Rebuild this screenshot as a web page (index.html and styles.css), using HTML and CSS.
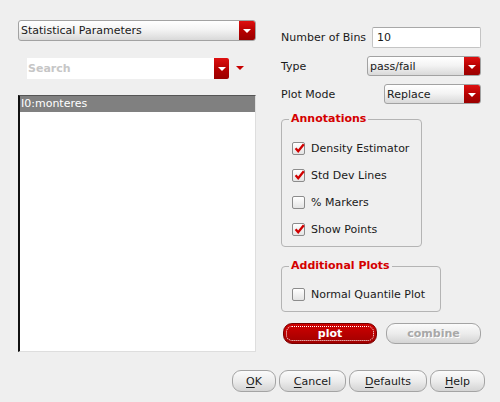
FILE: index.html
```html
<!DOCTYPE html>
<html>
<head>
<meta charset="utf-8">
<link rel="stylesheet" href="styles.css">
</head>
<body>
<div class="dialog">
  <div class="main">
    <div class="left">
      <div class="combo wide">
        <span class="combo-text">Statistical Parameters</span>
        <span class="combo-btn"><span class="tri"></span></span>
      </div>
      <div class="search-row">
        <div class="search">
          <span class="placeholder">Search</span>
          <span class="search-btn"><span class="tri"></span></span>
        </div>
        <span class="red-tri"></span>
      </div>
      <div class="list">
        <div class="list-item selected">I0:monteres</div>
      </div>
    </div>
    <div class="right">
      <div class="row">
        <span class="label">Number of Bins</span>
        <div class="input bins">10</div>
      </div>
      <div class="row">
        <span class="label">Type</span>
        <div class="combo type">
          <span class="combo-text">pass/fail</span>
          <span class="combo-btn"><span class="tri"></span></span>
        </div>
      </div>
      <div class="row">
        <span class="label">Plot Mode</span>
        <div class="combo mode">
          <span class="combo-text">Replace</span>
          <span class="combo-btn"><span class="tri"></span></span>
        </div>
      </div>
      <fieldset class="group annotations">
        <legend>Annotations</legend>
        <div class="check-row"><span class="cb checked"><svg viewBox="0 0 12 12"><path d="M2.6 6.2 L5.2 9.2 L10.8 2.2"/></svg></span><span>Density Estimator</span></div>
        <div class="check-row"><span class="cb checked"><svg viewBox="0 0 12 12"><path d="M2.6 6.2 L5.2 9.2 L10.8 2.2"/></svg></span><span>Std Dev Lines</span></div>
        <div class="check-row"><span class="cb"></span><span>% Markers</span></div>
        <div class="check-row"><span class="cb checked"><svg viewBox="0 0 12 12"><path d="M2.6 6.2 L5.2 9.2 L10.8 2.2"/></svg></span><span>Show Points</span></div>
      </fieldset>
      <fieldset class="group additional">
        <legend>Additional Plots</legend>
        <div class="check-row"><span class="cb"></span><span>Normal Quantile Plot</span></div>
      </fieldset>
      <div class="actions">
        <button class="btn plot"><span class="focus">plot</span></button>
        <button class="btn combine">combine</button>
      </div>
    </div>
  </div>
  <div class="footer">
    <button class="btn ok"><u>O</u>K</button>
    <button class="btn cancel"><u>C</u>ancel</button>
    <button class="btn defaults"><u>D</u>efaults</button>
    <button class="btn help"><u>H</u>elp</button>
  </div>
</div>
</body>
</html>
```

FILE: styles.css
```css
html, body {
  margin: 0;
  padding: 0;
  background: #efefef;
}
body {
  width: 500px;
  height: 402px;
  overflow: hidden;
  font-family: "DejaVu Sans", sans-serif;
  font-size: 11px;
  color: #1a1a1a;
}
.dialog {
  display: flex;
  flex-direction: column;
}
.main {
  display: flex;
}
.left {
  width: 238px;
  margin-left: 18px;
  padding-top: 20px;
  display: flex;
  flex-direction: column;
}
.combo {
  box-sizing: border-box;
  height: 21px;
  display: flex;
  align-items: center;
  border: 1px solid #a2a2a2;
  border-radius: 3px;
  background: linear-gradient(#ffffff, #f4f4f4 45%, #d9d9d9);
  overflow: hidden;
}
.combo-text {
  flex: 1;
  padding-left: 2px;
  white-space: nowrap;
}
.combo-btn {
  width: 16px;
  align-self: stretch;
  display: flex;
  align-items: center;
  justify-content: center;
  background: linear-gradient(#de1010, #b40000 55%, #9a0000);
}
.tri {
  width: 0;
  height: 0;
  border-left: 4px solid transparent;
  border-right: 4px solid transparent;
  border-top: 4px solid #ffffff;
  margin-top: 1px;
}
.search-row {
  display: flex;
  align-items: center;
  margin-top: 17px;
  margin-left: 9px;
}
.search {
  width: 202px;
  height: 21px;
  display: flex;
  align-items: center;
  background: #ffffff;
}
.placeholder {
  flex: 1;
  padding-left: 1px;
  color: #c6c6c6;
  font-weight: bold;
}
.search-btn {
  width: 15px;
  align-self: stretch;
  display: flex;
  align-items: center;
  justify-content: center;
  background: linear-gradient(#de1010, #b40000 55%, #9a0000);
  border-radius: 0 2px 2px 0;
}
.red-tri {
  margin-left: 7px;
  width: 0;
  height: 0;
  border-left: 4px solid transparent;
  border-right: 4px solid transparent;
  border-top: 4px solid #c80000;
  margin-top: -1px;
}
.list {
  margin-top: 16px;
  height: 257px;
  box-sizing: border-box;
  background: #ffffff;
  border-top: 1px solid #555555;
  border-left: 2px solid #111111;
  border-right: 1px solid #dedede;
  border-bottom: 1px solid #dedede;
}
.list-item {
  height: 16px;
  line-height: 16px;
  padding-left: 1px;
}
.list-item.selected {
  background: #808080;
  color: #ffffff;
}
.right {
  margin-left: 25px;
  width: 200px;
  padding-top: 27px;
  display: flex;
  flex-direction: column;
}
.row {
  display: flex;
  align-items: center;
  justify-content: space-between;
  margin-bottom: 8px;
}
.row + .row {
  height: 20px;
}
.label {
  white-space: nowrap;
}
.input {
  box-sizing: border-box;
  height: 21px;
  width: 109px;
  background: #ffffff;
  border: 1px solid #c4c4c4;
  border-top-color: #a8a8a8;
  border-radius: 2px;
  padding-left: 4px;
  line-height: 19px;
}
.type {
  width: 114px;
  height: 20px;
}
.mode {
  width: 97px;
  height: 20px;
}
.group {
  margin: 0;
  border: 1px solid #b4b4b4;
  border-radius: 4px;
  padding: 0 7px 9px 7px;
  box-sizing: border-box;
}
.group legend {
  padding: 0 2px;
  line-height: 14px;
  color: #d40000;
  font-weight: bold;
}
.annotations {
  width: 141px;
  margin-top: 0;
  padding-top: 14px;
  display: flex;
  flex-direction: column;
  gap: 11px;
}
.additional {
  width: 160px;
  margin-top: 12px;
  padding-top: 13px;
}
.check-row {
  display: flex;
  align-items: center;
  height: 16px;
  margin-left: 3px;
  gap: 6px;
  white-space: nowrap;
}
.cb {
  box-sizing: border-box;
  width: 13px;
  height: 13px;
  border: 1px solid #8c8c8c;
  border-radius: 2px;
  background: linear-gradient(#ffffff, #e4e4e4);
  display: flex;
  position: relative;
}
.cb svg {
  width: 12px;
  height: 12px;
  position: absolute;
  left: 0;
  top: -1px;
}
.cb path {
  fill: none;
  stroke: #d00000;
  stroke-width: 2.3;
}
.actions {
  display: flex;
  margin-top: 11px;
  margin-left: 2px;
  gap: 9px;
}
.btn {
  box-sizing: border-box;
  font-family: "DejaVu Sans", sans-serif;
  font-size: 11px;
  height: 21px;
  padding: 0;
  border: 1px solid #a4a4a4;
  border-radius: 9px;
  background: linear-gradient(#fbfbfb, #ececec 50%, #d4d4d4);
  color: #1a1a1a;
  display: flex;
  align-items: center;
  justify-content: center;
}
.plot {
  width: 94px;
  border-color: #7a0000;
  background: linear-gradient(#d00000, #b80000 50%, #a00000);
  color: #ffffff;
  font-weight: bold;
  padding: 2px;
}
.plot .focus {
  flex: 1;
  align-self: stretch;
  display: flex;
  align-items: center;
  justify-content: center;
  border: 1px dotted #ffffff;
  border-radius: 6px;
}
.combine {
  width: 95px;
  color: #a8a8a8;
  font-weight: bold;
  text-shadow: 1px 1px 0 #ffffff;
}
.footer {
  display: flex;
  justify-content: flex-end;
  margin-top: 18px;
  margin-right: 15px;
  gap: 3px;
}
.footer .btn {
  height: 22px;
}
.footer u {
  text-underline-offset: 2px;
}
.ok { width: 44px; }
.cancel { width: 67px; }
.defaults { width: 78px; }
.help { width: 55px; }
```
